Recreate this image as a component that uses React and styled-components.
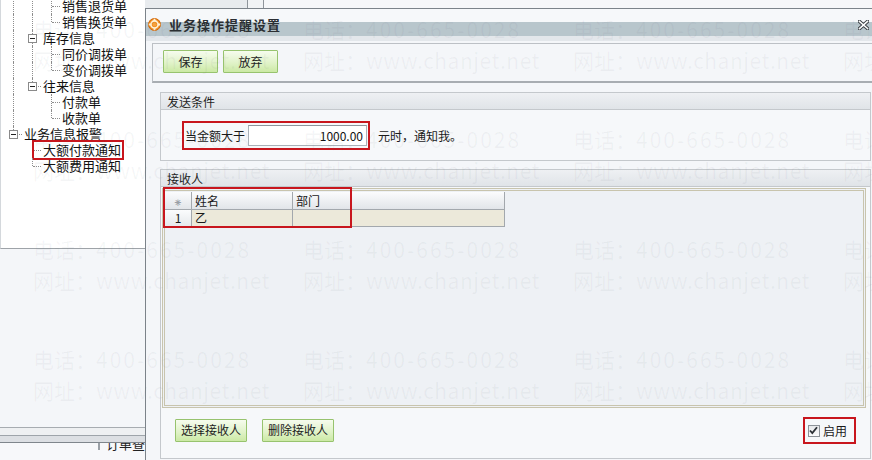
import styled, { createGlobalStyle } from 'styled-components'

const GlobalStyle = createGlobalStyle`
  html, body { margin: 0; padding: 0; }
  body {
    font-family: "Noto Sans CJK SC", "Noto Sans", sans-serif;
    font-size: 12px;
    color: #1a1a1a;
    background: #f4f6f9;
  }
`

const Screen = styled.div`
  position: relative;
  width: 872px;
  height: 460px;
  overflow: hidden;
  display: flex;
`

/* ---------- left navigation ---------- */

const LeftPane = styled.div`
  width: 145px;
  flex: none;
  display: flex;
  flex-direction: column;
`

const TreeBox = styled.div`
  height: 248px;
  flex: none;
  background: #fff;
  border-left: 1px solid #d4d8dc;
  border-bottom: 1px solid #9ea3a8;
  overflow: hidden;
`

const TreeList = styled.div`
  margin-top: -2px;
  padding-left: 2px;
`

const TreeRow = styled.div`
  display: flex;
  align-items: center;
  height: 16px;
`

const Guide = styled.span`
  position: relative;
  width: 19px;
  height: 16px;
  flex: none;

  &::before {
    content: '';
    display: ${p => (p.$kind === 'blank' ? 'none' : 'block')};
    position: absolute;
    left: 10px;
    top: 0;
    height: ${p => (p.$kind === 'elbow' ? '8px' : '16px')};
    border-left: 1px dotted #8e8e8e;
  }

  &::after {
    content: '';
    display: ${p => (p.$kind === 'tee' || p.$kind === 'elbow' ? 'block' : 'none')};
    position: absolute;
    left: 11px;
    top: 8px;
    width: 8px;
    border-top: 1px dotted #8e8e8e;
  }
`

const Expander = styled.span`
  position: absolute;
  left: 6px;
  top: 4px;
  width: 7px;
  height: 7px;
  border: 1px solid #8a8a8a;
  background: #fff;
  z-index: 1;

  &::after {
    content: '';
    position: absolute;
    left: 1px;
    right: 1px;
    top: 3px;
    border-top: 1px solid #222;
  }
`

const TreeLabel = styled.span`
  position: relative;
  margin-left: 2px;
  font-size: 13px;
  line-height: 16px;
  color: #111;
  white-space: nowrap;

  ${p => p.$marked && `
    &::after {
      content: '';
      position: absolute;
      left: -11px;
      right: -3px;
      top: -2px;
      bottom: -2px;
      border: 2px solid #c8161d;
    }
  `}
`

const GreyArea = styled.div`
  flex: 1;
  background: #f4f6f9;
`

const StatusBand = styled.div`
  height: 14px;
  flex: none;
  border-top: 1px solid #a7acb1;
  border-bottom: 1px solid #7f868c;
  background: linear-gradient(#eef0f2 0 7px, #9ea4aa 7px 8px, #dcdfe3 8px);
`

const BottomBar = styled.div`
  height: 17px;
  flex: none;
  background: #f7f8fa;
  display: flex;
  align-items: flex-start;
  padding-left: 98px;
  gap: 6px;
  overflow: hidden;
`

const MiniIcon = styled.span`
  width: 11px;
  height: 6px;
  border: 1px solid #9aa0a6;
  border-top: none;
  background: #e3e6ea;
`

const BottomText = styled.span`
  margin-top: -9px;
  font-size: 13px;
  color: #222;
  white-space: nowrap;
`

/* ---------- right side: window behind + dialog ---------- */

const RightArea = styled.div`
  flex: 1;
  display: flex;
  flex-direction: column;
  overflow: hidden;
`

const TopStrip = styled.div`
  height: 8px;
  flex: none;
  display: flex;
`

const StripCell = styled.div`
  width: ${p => (p.$w ? `${p.$w}px` : 'auto')};
  flex: ${p => (p.$w ? 'none' : '1')};
  background: ${p => p.$bg};
  border-right: ${p => (p.$edge ? '1px solid #8f959b' : 'none')};
`

const Dialog = styled.div`
  flex: 1;
  display: flex;
  flex-direction: column;
  border-top: 1px solid #7c838a;
  border-left: 1px solid #7c838a;
  background: #f4f6f9;
`

const TitleBar = styled.div`
  height: 32px;
  flex: none;
  display: flex;
  align-items: flex-start;
  padding: 9px 3px 0 2px;
  box-sizing: border-box;
  background: linear-gradient(#f6f8fa 0 13px, #b8c6cc 13px 27px, #e3e7eb 27px);
`

const TitleText = styled.span`
  margin-left: 8px;
  margin-top: -1px;
  font-size: 13px;
  font-weight: 700;
  letter-spacing: 1px;
  color: #2b2f33;
  line-height: 16px;
`

const CloseButton = styled.span`
  margin-left: auto;
  margin-top: 2px;
  display: flex;
`

const Toolbar = styled.div`
  margin: 2px 0 0 6px;
  height: 40px;
  box-sizing: border-box;
  display: flex;
  gap: 5px;
  padding: 6px 10px;
  border: 1px solid #bcc0c5;
  border-right: none;
  border-bottom: 2px solid #a8adb2;
  background: #f4f6f9;
`

const GreenButton = styled.button`
  height: 23px;
  ${p => (p.$tool ? 'width: 55px;' : 'padding: 0 5px;')}
  border: 1px solid #97c36e;
  border-radius: 1px;
  background: linear-gradient(#f6fcee, #dff2c6 60%, #cbe9a4);
  font-family: "Noto Sans CJK SC", "Noto Sans", sans-serif;
  font-size: 12px;
  color: #1d1d1d;
  line-height: 20px;
  cursor: default;
`

const Group = styled.section`
  margin: ${p => p.$top}px 1px ${p => (p.$grow ? '1px' : '0')} 14px;
  display: flex;
  flex-direction: column;
  flex: ${p => (p.$grow ? '1' : 'none')};
`

const GroupHeader = styled.div`
  height: 18px;
  box-sizing: border-box;
  padding-left: 6px;
  border: 1px solid #c4c8cc;
  background: linear-gradient(#eef0f3, #e0e4e8);
  font-size: 12px;
  line-height: 17px;
  color: #1f1f1f;
`

const GroupBody = styled.div`
  border: 1px solid #c4c8cc;
  border-top: none;
  background: #f6f8fa;
  flex: 1;
  display: flex;
  flex-direction: column;
`

const ConditionRow = styled.div`
  display: flex;
  align-items: center;
  gap: 8px;
  padding: 11px 0 10px 21px;
`

const Marked = styled.div`
  display: flex;
  align-items: center;
  gap: 3px;
  padding: ${p => p.$pad || '2px'};
  border: 2px solid #c8161d;
`

const Amount = styled.input`
  width: 119px;
  height: 21px;
  box-sizing: border-box;
  border: 1px solid #aab1b8;
  border-top-color: #8d949b;
  background: #fff;
  text-align: right;
  padding: 0 3px;
  font-family: "Noto Sans CJK SC", "Noto Sans", sans-serif;
  font-size: 12px;
  color: #111;
`

const GridWrap = styled.div`
  position: relative;
  height: 220px;
  box-sizing: border-box;
  margin: 1px 4px 0 1px;
  padding: 1px 0 0 0;
  border: 3px double #c8c4ad;
  background: #eef1f5;
`

const GridTable = styled.div`
  display: grid;
  grid-template-columns: 27px 101px 212px;
  grid-template-rows: 18px 17px;
  width: 341px;
`

const HeadCell = styled.div`
  box-sizing: border-box;
  padding-left: ${p => (p.$center ? '0' : '3px')};
  text-align: ${p => (p.$center ? 'center' : 'left')};
  border-right: 1px solid #a3a8ad;
  border-bottom: 1px solid #a3a8ad;
  background: linear-gradient(#fbfcfd, #e2e5e9);
  font-size: 12px;
  line-height: 17px;
  color: ${p => (p.$muted ? '#9aa0a6' : '#1a1a1a')};
`

const RowCell = styled.div`
  box-sizing: border-box;
  padding-left: ${p => (p.$center ? '0' : '3px')};
  text-align: ${p => (p.$center ? 'center' : 'left')};
  border-right: 1px solid #a3a8ad;
  border-bottom: 1px solid #a3a8ad;
  background: ${p => (p.$index ? 'linear-gradient(#fbfcfd, #e6e9ec)' : '#ece9da')};
  font-size: 12px;
  line-height: 16px;
`

const GridMark = styled.div`
  position: absolute;
  left: -2px;
  top: -4px;
  width: 189px;
  height: 41px;
  box-sizing: border-box;
  border: 2px solid #c8161d;
  pointer-events: none;
`

const FooterRow = styled.div`
  display: flex;
  align-items: center;
  gap: 15px;
  padding: 8px 14px 0 14px;
`

const CheckLabel = styled.label`
  display: flex;
  align-items: center;
  gap: 3px;
  font-size: 12px;
`

const CheckBox = styled.span`
  width: 12px;
  height: 12px;
  box-sizing: border-box;
  border: 1px solid #8c9298;
  background: linear-gradient(#e6e8ea, #fbfbfc);
  display: flex;
  align-items: center;
  justify-content: center;
`

const Watermarks = styled.div`
  position: absolute;
  inset: 0;
  pointer-events: none;
  display: grid;
  grid-template-columns: repeat(4, 270px);
  grid-auto-rows: 110px;
  padding: 14px 0 0 33px;
  z-index: 10;
`

const Mark = styled.div`
  font-size: 21px;
  line-height: 31px;
  color: rgba(90, 100, 112, 0.06);
  white-space: nowrap;
`

const MarkValue = styled.span`
  letter-spacing: ${p => (p.$wide ? '2px' : '0.5px')};
`

function Lifebuoy() {
  return (
    <svg width="13" height="13" viewBox="0 0 13 13">
      <circle cx="6.5" cy="6.5" r="6" fill="#f08d1f" stroke="#d0680c" strokeWidth="1" />
      <circle cx="6.5" cy="6.5" r="3.6" fill="none" stroke="#fff3d8" strokeWidth="1.6" />
      <path d="M6.5 0.8v2.4M6.5 9.8v2.4M0.8 6.5h2.4M9.8 6.5h2.4" stroke="#fff3d8" strokeWidth="1.8" />
      <circle cx="6.5" cy="6.5" r="2" fill="#f7a23c" />
    </svg>
  )
}

function CloseIcon() {
  return (
    <svg width="11" height="10" viewBox="0 0 11 10">
      <path d="M1.5 1.5l8 7M9.5 1.5l-8 7" stroke="#3a3f44" strokeWidth="3.6" strokeLinecap="square" />
      <path d="M1.5 1.5l8 7M9.5 1.5l-8 7" stroke="#fff" strokeWidth="1.6" strokeLinecap="square" />
    </svg>
  )
}

function CheckMark() {
  return (
    <svg width="9" height="9" viewBox="0 0 9 9">
      <path d="M1 4.5l2.3 2.6L8 1.2" fill="none" stroke="#2c3136" strokeWidth="1.8" />
    </svg>
  )
}

const tree = [
  { guides: ['pipe', 'pipe', 'tee'], label: '销售退货单' },
  { guides: ['pipe', 'pipe', 'elbow'], label: '销售换货单' },
  { guides: ['pipe', 'pipe'], box: 1, label: '库存信息' },
  { guides: ['pipe', 'pipe', 'tee'], label: '同价调拨单' },
  { guides: ['pipe', 'pipe', 'elbow'], label: '变价调拨单' },
  { guides: ['pipe', 'elbow'], box: 1, label: '往来信息' },
  { guides: ['pipe', 'blank', 'tee'], label: '付款单' },
  { guides: ['pipe', 'blank', 'elbow'], label: '收款单' },
  { guides: ['elbow'], box: 0, label: '业务信息报警' },
  { guides: ['blank', 'tee'], label: '大额付款通知', marked: true },
  { guides: ['blank', 'elbow'], label: '大额费用通知' },
]

const marks = Array.from({ length: 16 }, (_, i) => i)

export default function App() {
  return (
    <>
      <GlobalStyle />
      <Screen>
        <LeftPane>
          <TreeBox>
            <TreeList>
              {tree.map(node => (
                <TreeRow key={node.label}>
                  {node.guides.map((g, i) => (
                    <Guide key={i} $kind={g}>
                      {node.box === i && <Expander />}
                    </Guide>
                  ))}
                  <TreeLabel $marked={node.marked}>{node.label}</TreeLabel>
                </TreeRow>
              ))}
            </TreeList>
          </TreeBox>
          <GreyArea />
          <StatusBand />
          <BottomBar>
            <MiniIcon />
            <BottomText>订单查</BottomText>
          </BottomBar>
        </LeftPane>

        <RightArea>
          <TopStrip>
            <StripCell $w={102} $bg="#e8ebee" $edge />
            <StripCell $w={15} $bg="#f1f3f5" $edge />
            <StripCell $bg="#f6f7f9" />
          </TopStrip>

          <Dialog>
            <TitleBar>
              <Lifebuoy />
              <TitleText>业务操作提醒设置</TitleText>
              <CloseButton><CloseIcon /></CloseButton>
            </TitleBar>

            <Toolbar>
              <GreenButton $tool>保存</GreenButton>
              <GreenButton $tool>放弃</GreenButton>
            </Toolbar>

            <Group $top={9}>
              <GroupHeader>发送条件</GroupHeader>
              <GroupBody>
                <ConditionRow>
                  <Marked $pad="2px 1px">
                    <span>当金额大于</span>
                    <Amount readOnly value="1000.00" />
                  </Marked>
                  <span>元时，通知我。</span>
                </ConditionRow>
              </GroupBody>
            </Group>

            <Group $top={8} $grow>
              <GroupHeader>接收人</GroupHeader>
              <GroupBody>
                <GridWrap>
                  <GridTable>
                    <HeadCell $center $muted>⁕</HeadCell>
                    <HeadCell>姓名</HeadCell>
                    <HeadCell>部门</HeadCell>
                    <RowCell $center $index>1</RowCell>
                    <RowCell>乙</RowCell>
                    <RowCell />
                  </GridTable>
                  <GridMark />
                </GridWrap>
                <FooterRow>
                  <GreenButton>选择接收人</GreenButton>
                  <GreenButton>删除接收人</GreenButton>
                  <Marked $pad="3px 7px 3px 3px" style={{ marginLeft: 'auto', marginTop: '1px' }}>
                    <CheckLabel>
                      <CheckBox><CheckMark /></CheckBox>
                      启用
                    </CheckLabel>
                  </Marked>
                </FooterRow>
              </GroupBody>
            </Group>
          </Dialog>
        </RightArea>

        <Watermarks>
          {marks.map(i => (
            <Mark key={i}>
              <div>电话：<MarkValue $wide>400-665-0028</MarkValue></div>
              <div>网址：<MarkValue>www.chanjet.net</MarkValue></div>
            </Mark>
          ))}
        </Watermarks>
      </Screen>
    </>
  )
}
